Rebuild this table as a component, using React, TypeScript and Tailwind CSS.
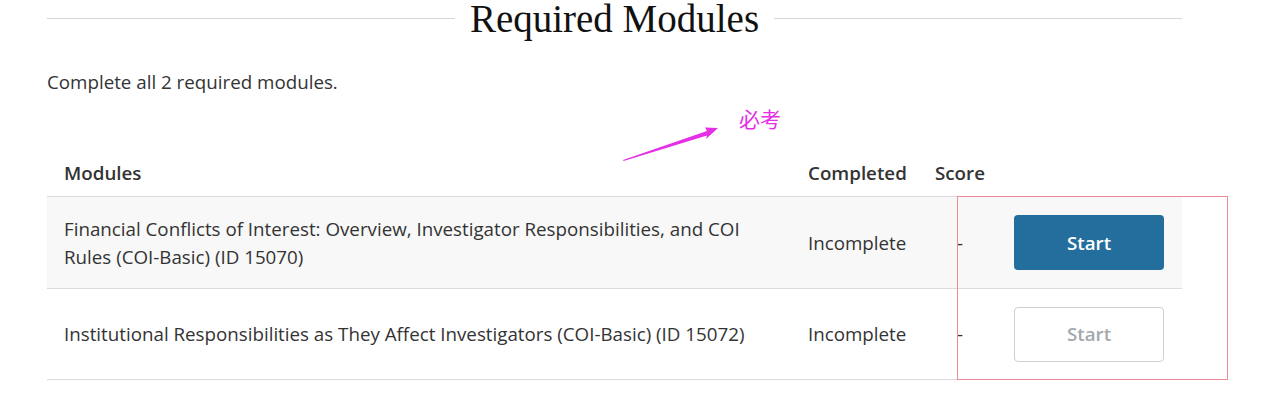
type Module = {
  title: string;
  status: string;
  score: string;
  primary: boolean;
};

const modules: Array<Module> = [
  {
    title:
      "Financial Conflicts of Interest: Overview, Investigator Responsibilities, and COI Rules (COI-Basic) (ID 15070)",
    status: "Incomplete",
    score: "-",
    primary: true,
  },
  {
    title:
      "Institutional Responsibilities as They Affect Investigators (COI-Basic) (ID 15072)",
    status: "Incomplete",
    score: "-",
    primary: false,
  },
];

const cols = "grid grid-cols-[743px_128px_79px_185px]";

export default function App() {
  return (
    <div className="relative h-[413px] w-[1280px] overflow-hidden bg-white font-['Open_Sans',sans-serif] text-[#333]">
      <div className="ml-[47px] w-[1135px]">
        {/* Heading */}
        <div className="flex h-[37px] items-center gap-[15px]">
          <div className="h-px flex-1 bg-[#d6d6d6]" />
          <h2 className="font-['Liberation_Serif',serif] text-[39px] leading-[37px] text-[#111]">
            Required Modules
          </h2>
          <div className="h-px flex-1 bg-[#d6d6d6]" />
        </div>

        <p className="mt-[33px] text-[18.75px] leading-[24px] text-[#333]">
          Complete all 2 required modules.
        </p>

        {/* Table */}
        <div className="mt-[57px]">
          <div className={`${cols} h-[46px] items-center border-b border-[#dcdcdc] text-[18.75px] font-semibold text-[#333]`}>
            <div className="pl-[17px]">Modules</div>
            <div className="pl-[18px]">Completed</div>
            <div className="pl-[17px]">Score</div>
            <div />
          </div>

          {modules.map((m, i) => (
            <div
              key={m.title}
              className={`${cols} items-center border-b border-[#dcdcdc] text-[18.75px] leading-[28px] ${i === 0 ? "h-[92px] bg-[#f8f8f8]" : "h-[91px] bg-white"}`}
            >
              <div className="pl-[17px] pr-[20px]">{m.title}</div>
              <div className="pl-[18px]">{m.status}</div>
              <div className="pl-[39px]">{m.score}</div>
              <div className="pl-[17px]">
                {m.primary ? (
                  <button className="flex h-[55px] w-[150px] items-center justify-center rounded-[4px] bg-[#236e9c] text-[18.75px] font-semibold text-white">
                    Start
                  </button>
                ) : (
                  <button className="flex h-[55px] w-[150px] items-center justify-center rounded-[4px] border border-[#cfcfcf] bg-white text-[18.75px] font-semibold text-[#a3a8ad]">
                    Start
                  </button>
                )}
              </div>
            </div>
          ))}
        </div>
      </div>

      {/* Annotations */}
      <div className="absolute left-[957px] top-[196px] h-[184px] w-[271px] border border-[#f08a95]" />
      <svg
        className="absolute left-[615px] top-[120px]"
        width="110"
        height="45"
        viewBox="0 0 110 45"
      >
        <path
          d="M8 40 L8.6 41 L92 15.5 L91 19 L103 8 L90 7.5 L92 11 Z"
          fill="#e52ee5"
        />
      </svg>
      <span className="absolute left-[739px] top-[104px] font-['Noto_Sans_CJK_SC',sans-serif] text-[21px] leading-[28px] text-[#e52ee5]">
        必考
      </span>
    </div>
  );
}
